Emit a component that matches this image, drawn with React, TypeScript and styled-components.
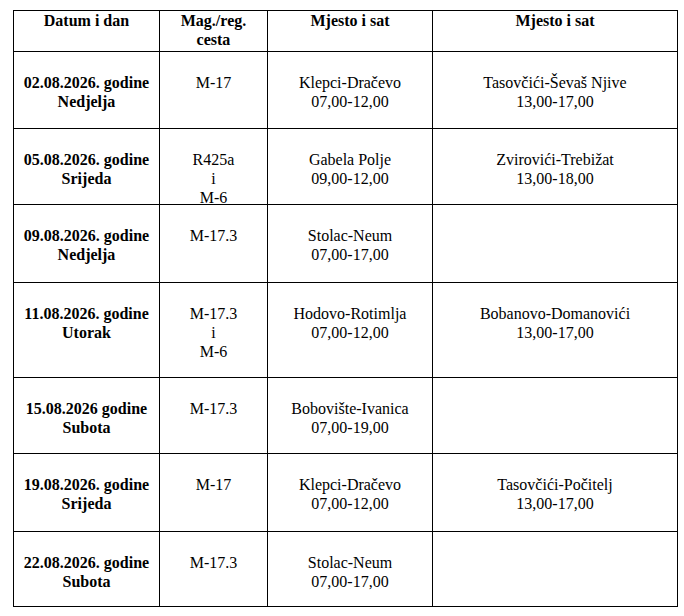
import React from "react";
import styled, { createGlobalStyle } from "styled-components";

const GlobalStyle = createGlobalStyle`
  html, body {
    margin: 0;
    padding: 0;
    background: #ffffff;
  }
  body {
    font-family: "Liberation Serif", "Times New Roman", serif;
    color: #000000;
  }
`;

const Page = styled.div`
  padding: 10px 0 0 13px;
`;

const Table = styled.table`
  border-collapse: collapse;
  table-layout: fixed;
  width: 664px;
  font-family: "Liberation Serif", "Times New Roman", serif;
  font-size: 16px;
  line-height: 19px;
  color: #000;
`;

const Row = styled.tr<{ $h: number }>`
  height: ${(p) => p.$h}px;
`;

const HeadCell = styled.th`
  border: 1px solid #000;
  font-family: inherit;
  font-weight: bold;
  text-align: center;
  vertical-align: top;
  padding: 0 4px;
`;

const Cell = styled.td<{ $bold?: boolean }>`
  border: 1px solid #000;
  font-family: inherit;
  font-weight: ${(p) => (p.$bold ? "bold" : "normal")};
  text-align: center;
  vertical-align: top;
  padding: 21px 4px 0;
`;

/* lets a third line run into the bottom gap without growing the row */
const CellText = styled.div`
  margin-bottom: -8px;
`;

type Entry = {
  date: string;
  day: string;
  road: string[];
  first: [string, string];
  second?: [string, string];
  h: number;
};

const rows: Entry[] = [
  {
    date: "02.08.2026. godine",
    day: "Nedjelja",
    road: ["M-17"],
    first: ["Klepci-Dračevo", "07,00-12,00"],
    second: ["Tasovčići-Ševaš Njive", "13,00-17,00"],
    h: 77,
  },
  {
    date: "05.08.2026. godine",
    day: "Srijeda",
    road: ["R425a", "i", "M-6"],
    first: ["Gabela Polje", "09,00-12,00"],
    second: ["Zvirovići-Trebižat", "13,00-18,00"],
    h: 76,
  },
  {
    date: "09.08.2026. godine",
    day: "Nedjelja",
    road: ["M-17.3"],
    first: ["Stolac-Neum", "07,00-17,00"],
    h: 78,
  },
  {
    date: "11.08.2026. godine",
    day: "Utorak",
    road: ["M-17.3", "i", "M-6"],
    first: ["Hodovo-Rotimlja", "07,00-12,00"],
    second: ["Bobanovo-Domanovići", "13,00-17,00"],
    h: 95,
  },
  {
    date: "15.08.2026 godine",
    day: "Subota",
    road: ["M-17.3"],
    first: ["Bobovište-Ivanica", "07,00-19,00"],
    h: 76,
  },
  {
    date: "19.08.2026. godine",
    day: "Srijeda",
    road: ["M-17"],
    first: ["Klepci-Dračevo", "07,00-12,00"],
    second: ["Tasovčići-Počitelj", "13,00-17,00"],
    h: 78,
  },
  {
    date: "22.08.2026. godine",
    day: "Subota",
    road: ["M-17.3"],
    first: ["Stolac-Neum", "07,00-17,00"],
    h: 75,
  },
];

function Lines({ items }: { items: string[] }) {
  return (
    <CellText>
      {items.map((t, i) => (
        <React.Fragment key={i}>
          {i > 0 && <br />}
          {t}
        </React.Fragment>
      ))}
    </CellText>
  );
}

export default function App() {
  return (
    <Page>
      <GlobalStyle />
      <Table>
        <colgroup>
          <col style={{ width: 146 }} />
          <col style={{ width: 108 }} />
          <col style={{ width: 165 }} />
          <col style={{ width: 245 }} />
        </colgroup>
        <thead>
          <Row $h={41}>
            <HeadCell>Datum i dan</HeadCell>
            <HeadCell>
              Mag./reg.
              <br />
              cesta
            </HeadCell>
            <HeadCell>Mjesto i sat</HeadCell>
            <HeadCell>Mjesto i sat</HeadCell>
          </Row>
        </thead>
        <tbody>
          {rows.map((r) => (
            <Row key={r.date} $h={r.h}>
              <Cell $bold>
                <Lines items={[r.date, r.day]} />
              </Cell>
              <Cell>
                <Lines items={r.road} />
              </Cell>
              <Cell>
                <Lines items={r.first} />
              </Cell>
              <Cell>{r.second && <Lines items={r.second} />}</Cell>
            </Row>
          ))}
        </tbody>
      </Table>
    </Page>
  );
}
